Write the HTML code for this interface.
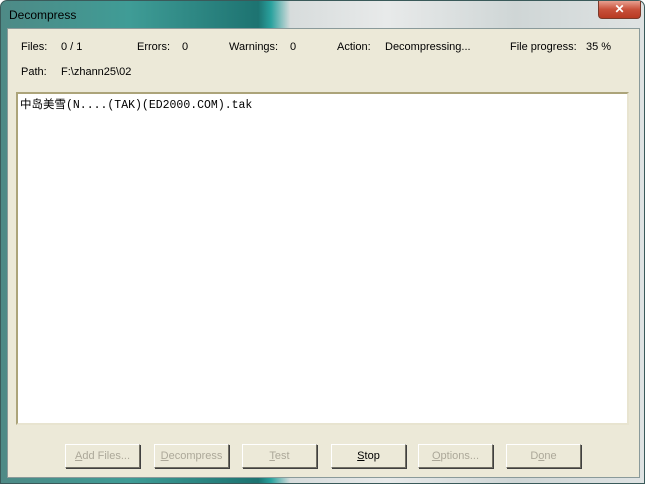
<!DOCTYPE html>
<html><head><style>
body{margin:0;width:645px;height:484px;overflow:hidden;background:#fff;font-family:"Liberation Sans",sans-serif;}
.win{position:absolute;left:0;top:0;width:643px;height:482px;border:1px solid #3a5a5a;border-radius:7px 7px 0 0;
background:linear-gradient(90deg,#4e8a86 0,#3f9c96 20%,#1d7371 40%,#2aa29e 42%,#d7dcdc 45%,#e8eaea 60%,#cfd6d6 80%,#dfe3e3 100%);}
.title{position:absolute;left:8px;top:7px;font-size:12px;color:#000;}
.close{position:absolute;left:597px;top:0;width:41px;height:17px;border:1px solid #7a3a2a;border-top:none;border-radius:0 0 4px 4px;background:linear-gradient(#e8a090,#c8503a 50%,#b83a22);color:#fff;font-size:12px;font-weight:bold;text-align:center;line-height:16px;}
.client{position:absolute;left:6px;top:27px;width:631px;height:448px;background:#ECE9D8;border:1px solid #8a9a9a;}
.t{position:absolute;font-size:11px;color:#000;}
.list{position:absolute;left:8px;top:63px;width:609px;height:329px;background:#fff;border:2px solid #aca47a;border-right-color:#e8e4d0;border-bottom-color:#e8e4d0;}
.list span{position:absolute;left:2px;top:2px;font-family:"Liberation Mono","Noto Sans CJK SC",monospace;font-size:11.5px;}
.b{position:absolute;top:415px;width:73px;height:22px;border:1px solid #fff;border-right-color:#716f64;border-bottom-color:#716f64;box-shadow:1px 1px 0 #404040;font-size:11px;text-align:center;line-height:22px;color:#aca899;}
.b.on{color:#000}
</style></head><body>
<div class="win">
<div class="title">Decompress</div>
<div class="close">✕</div>
<div class="client">
<div class="t" style="left:13px;top:12px">Files:</div>
<div class="t" style="left:53px;top:12px">0 / 1</div>
<div class="t" style="left:129px;top:12px">Errors:</div>
<div class="t" style="left:174px;top:12px">0</div>
<div class="t" style="left:221px;top:12px">Warnings:</div>
<div class="t" style="left:282px;top:12px">0</div>
<div class="t" style="left:329px;top:12px">Action:</div>
<div class="t" style="left:377px;top:12px">Decompressing...</div>
<div class="t" style="left:502px;top:12px">File progress:</div>
<div class="t" style="left:578px;top:12px">35 %</div>
<div class="t" style="left:13px;top:37px">Path:</div>
<div class="t" style="left:53px;top:37px">F:\zhann25\02</div>
<div class="list"><span>中岛美雪(N....(TAK)(ED2000.COM).tak</span></div>
<div class="b" style="left:57px"><u>A</u>dd Files...</div>
<div class="b" style="left:146px"><u>D</u>ecompress</div>
<div class="b" style="left:234px"><u>T</u>est</div>
<div class="b on" style="left:323px"><u>S</u>top</div>
<div class="b" style="left:410px"><u>O</u>ptions...</div>
<div class="b" style="left:498px">D<u>o</u>ne</div>
</div>
</div>
</body></html>
